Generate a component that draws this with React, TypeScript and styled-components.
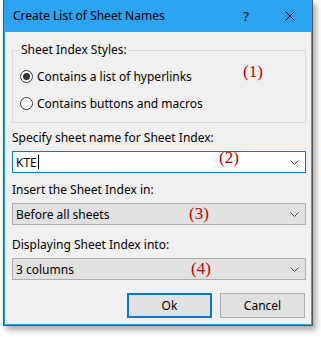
import React from 'react';
import styled, { createGlobalStyle } from 'styled-components';

const GlobalStyle = createGlobalStyle`
  html, body {
    margin: 0;
    padding: 0;
    background: #fff;
  }
  body {
    font-family: "Noto Sans", "Open Sans", sans-serif;
    font-size: 12px;
    color: #000;
  }
`;

const Stage = styled.div`
  width: 321px;
  height: 337px;
  padding-left: 3px;
  box-sizing: border-box;
`;

const Window = styled.div`
  width: 310px;
  border: 1px solid #555;
  border-top: none;
  box-sizing: border-box;
  box-shadow: 3px 4px 6px rgba(0, 0, 0, 0.35);
`;

const TitleBar = styled.div`
  height: 32px;
  background: #2aa3f1;
  display: flex;
  align-items: center;
  padding-left: 9px;
`;

const Title = styled.span`
  flex: 1;
  line-height: 16px;
`;

const TitleButton = styled.span`
  width: 44px;
  display: flex;
  justify-content: center;
  align-items: center;
  font-size: 13px;
`;

const Body = styled.div`
  position: relative;
  background: #f0f0f0;
  border: 1px solid #2aa3f1;
  border-top: none;
  padding: 10px 5px 6px 7px;
`;

const Group = styled.fieldset`
  margin: 0;
  padding: 0 0 9px 7px;
  border: 1px solid #dcdcdc;
`;

const Legend = styled.legend`
  padding: 0 1px;
  line-height: 16px;
`;

const RadioRow = styled.label<{ $first?: boolean }>`
  display: flex;
  align-items: center;
  height: 20px;
  margin-top: ${({ $first }) => ($first ? '8px' : '7px')};
  gap: 4px;
`;

const RadioDot = styled.span<{ $checked?: boolean }>`
  width: 11px;
  height: 11px;
  border: 1px solid #333;
  border-radius: 50%;
  background: #fff;
  display: flex;
  align-items: center;
  justify-content: center;
  &::after {
    content: "";
    width: 7px;
    height: 7px;
    border-radius: 50%;
    background: ${({ $checked }) => ($checked ? '#333' : 'transparent')};
  }
`;

const Field = styled.div<{ $top: number }>`
  margin-top: ${({ $top }) => $top}px;
`;

const Label = styled.div`
  line-height: 16px;
  margin-bottom: 5px;
`;

const Combo = styled.div<{ $editable?: boolean }>`
  height: 22px;
  box-sizing: border-box;
  display: flex;
  align-items: center;
  padding: 0 6px 0 3px;
  border: 1px solid ${({ $editable }) => ($editable ? '#0078d7' : '#adadad')};
  background: ${({ $editable }) => ($editable ? '#fff' : '#e1e1e1')};
`;

const ComboText = styled.span`
  flex: 1;
  display: flex;
  align-items: center;
`;

const Caret = styled.span`
  width: 1px;
  height: 14px;
  background: #000;
  margin-left: 1px;
`;

const Buttons = styled.div`
  display: flex;
  justify-content: flex-end;
  gap: 8px;
  margin-top: 13px;
  padding-right: 1px;
`;

const Button = styled.button<{ $default?: boolean }>`
  width: 85px;
  height: 25px;
  box-sizing: border-box;
  margin: 0;
  padding: 0;
  font: inherit;
  color: #000;
  background: #e1e1e1;
  border: ${({ $default }) => ($default ? '2px solid #0078d7' : '1px solid #adadad')};
`;

const Note = styled.span<{ $x: number; $y: number }>`
  position: absolute;
  left: ${({ $x }) => $x}px;
  top: ${({ $y }) => $y}px;
  font-family: "Liberation Serif", serif;
  font-size: 17px;
  line-height: 20px;
  color: #c00000;
`;

const Chevron = () => (
  <svg width="9" height="5" viewBox="0 0 9 5">
    <polyline points="0.5,0.5 4.5,4.5 8.5,0.5" fill="none" stroke="#444" strokeWidth="1" />
  </svg>
);

const Close = () => (
  <svg width="10" height="10" viewBox="0 0 10 10">
    <path d="M0.5 0.5 L9.5 9.5 M9.5 0.5 L0.5 9.5" stroke="#000" strokeWidth="1" />
  </svg>
);

export default function App() {
  return (
    <Stage>
      <GlobalStyle />
      <Window>
        <TitleBar>
          <Title>Create List of Sheet Names</Title>
          <TitleButton>?</TitleButton>
          <TitleButton>
            <Close />
          </TitleButton>
        </TitleBar>
        <Body>
          <Group>
            <Legend>Sheet Index Styles:</Legend>
            <RadioRow $first>
              <RadioDot $checked />
              Contains a list of hyperlinks
            </RadioRow>
            <RadioRow>
              <RadioDot />
              Contains buttons and macros
            </RadioRow>
          </Group>

          <Field $top={7}>
            <Label>Specify sheet name for Sheet Index:</Label>
            <Combo $editable>
              <ComboText>
                KTE
                <Caret />
              </ComboText>
              <Chevron />
            </Combo>
          </Field>

          <Field $top={9}>
            <Label>Insert the Sheet Index in:</Label>
            <Combo>
              <ComboText>Before all sheets</ComboText>
              <Chevron />
            </Combo>
          </Field>

          <Field $top={12}>
            <Label>Displaying Sheet Index into:</Label>
            <Combo>
              <ComboText>3 columns</ComboText>
              <Chevron />
            </Combo>
          </Field>

          <Buttons>
            <Button $default>Ok</Button>
            <Button>Cancel</Button>
          </Buttons>

          <Note $x={238} $y={30}>(1)</Note>
          <Note $x={214} $y={116}>(2)</Note>
          <Note $x={184} $y={172}>(3)</Note>
          <Note $x={186} $y={227}>(4)</Note>
        </Body>
      </Window>
    </Stage>
  );
}
